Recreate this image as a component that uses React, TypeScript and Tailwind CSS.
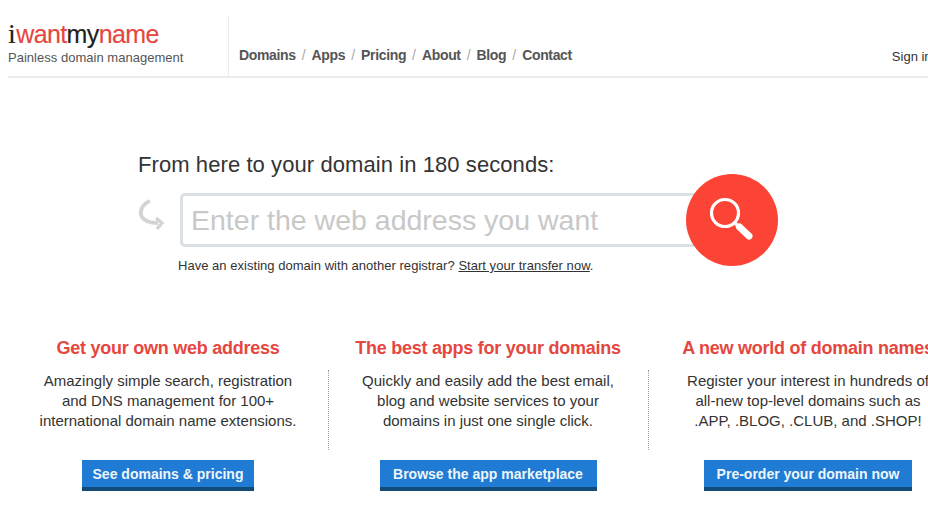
const font = "font-['Liberation_Sans',Arial,sans-serif]"

const nav = ["Domains", "Apps", "Pricing", "About", "Blog", "Contact"]

const columns = [
  {
    title: "Get your own web address",
    lines: ["Amazingly simple search, registration", "and DNS management for 100+", "international domain name extensions."],
    cta: "See domains & pricing",
    ctaWidth: "w-[172px]",
  },
  {
    title: "The best apps for your domains",
    lines: ["Quickly and easily add the best email,", "blog and website services to your", "domains in just one single click."],
    cta: "Browse the app marketplace",
    ctaWidth: "w-[217px]",
  },
  {
    title: "A new world of domain names",
    lines: ["Register your interest in hundreds of", "all-new top-level domains such as", ".APP, .BLOG, .CLUB, and .SHOP!"],
    cta: "Pre-order your domain now",
    ctaWidth: "w-[208px]",
  },
]

function Header() {
  return (
    <header className="ml-2 flex h-[78px] w-[960px] border-b-2 border-[#ebebeb]">
      <div className="mt-4 h-[60px] w-[221px] border-r border-[#ebebeb]">
        <div className="mt-1 h-[27px] whitespace-nowrap text-[25px] leading-[27px] tracking-[-0.6px] text-[#e5473f] [-webkit-text-stroke:0.15px]">
          <span className="mr-[1px] font-['Liberation_Serif',serif] text-[28px] text-[#222]">i</span>want<span className="text-[#222]">my</span>name
        </div>
        <p className="mt-[3px] text-[13px] leading-4 tracking-[0.02px] text-[#555]">Painless domain management</p>
      </div>
      <nav className="ml-[10px] mt-[47px] flex h-4 items-center text-sm font-semibold text-[#555]">
        {nav.map((item, i) => (
          <span key={item} className="flex items-center">
            {i > 0 && <span className="mx-[6px] font-normal text-[#aaa]">/</span>}
            <span className="tracking-[-0.35px]">{item}</span>
          </span>
        ))}
      </nav>
      <span className="ml-[320px] mt-[49px] whitespace-nowrap text-[13px] leading-4 text-[#333]">Sign in</span>
    </header>
  )
}

function Search() {
  return (
    <section className="ml-[138px] mt-[73px] w-[660px]">
      <h1 className="text-[22px] leading-7 tracking-[0.08px] text-[#333]">From here to your domain in 180 seconds:</h1>
      <div className="mt-[14px] flex items-center">
        <svg width="26" height="34" viewBox="0 0 26 34" className="-mt-[10px] mr-[16px] text-[#d4d4d4]" fill="none" stroke="currentColor" strokeWidth="4">
          <path d="M12 3 C4 6 1 14 4 19 C7 24 13 25 20 25" />
          <path d="M18 20 L24 25 L19 31" strokeWidth="3.5" />
        </svg>
        <div className="relative flex h-[54px] w-[518px] items-center rounded-[5px] border-[3px] border-[#d9e1e6] bg-white pl-[8px]">
          <span className="whitespace-nowrap text-[28.5px] text-[#c8c8c8]">Enter the web address you want</span>
          <button className="absolute -right-[83px] -top-[22px] flex h-[92px] w-[92px] items-center justify-center rounded-full bg-[#fb4436]">
            <svg width="46" height="46" viewBox="0 0 46 46" fill="none" stroke="white">
              <circle cx="16" cy="16" r="13.5" strokeWidth="3.2" />
              <path d="M25 25 L30 30" strokeWidth="3.5" />
              <path d="M30.5 30 L40 39" strokeWidth="7" strokeLinecap="round" />
            </svg>
          </button>
        </div>
      </div>
      <p className="ml-10 mt-[11px] text-[13px] leading-4 tracking-[0.03px] text-[#333]">
        Have an existing domain with another registrar? <span className="underline">Start your transfer now</span>.
      </p>
    </section>
  )
}

function Column({ title, lines, cta, ctaWidth, divider }: (typeof columns)[number] & { divider: boolean }) {
  return (
    <div className="relative w-80 text-center">
      {divider && <span className="absolute left-0 top-[33px] h-[80px] border-l border-dotted border-[#999]" />}
      <h2 className="whitespace-nowrap text-lg font-bold leading-[22px] tracking-[-0.25px] text-[#e5473f]">{title}</h2>
      <p className="mt-[12px] whitespace-nowrap text-[15px] leading-5 text-[#333]">
        {lines.map((line) => (
          <span key={line} className="block">{line}</span>
        ))}
      </p>
      <button className={`mx-auto mt-[29px] block h-[31px] ${ctaWidth} border-b-4 border-[#124a78] bg-[#1f7bd3] text-sm font-bold text-[#eef6fc]`}>
        {cta}
      </button>
    </div>
  )
}

export default function App() {
  return (
    <div className={`${font} h-[523px] w-[928px] overflow-hidden bg-white`}>
      <Header />
      <Search />
      <div className="ml-2 mt-[63px] flex w-[960px]">
        {columns.map((c, i) => (
          <Column key={c.title} {...c} divider={i > 0} />
        ))}
      </div>
    </div>
  )
}
